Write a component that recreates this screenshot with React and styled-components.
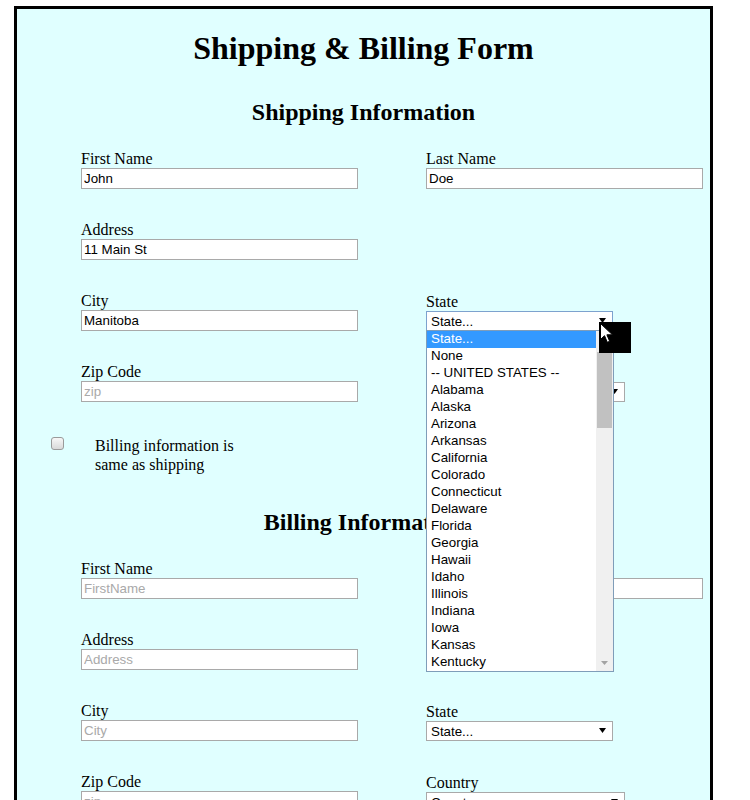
import React from 'react';
import styled, { createGlobalStyle } from 'styled-components';

const GlobalStyle = createGlobalStyle`
  html, body {
    margin: 0;
    padding: 0;
    background: #ffffff;
    overflow: hidden;
  }
  body {
    font-family: "Liberation Serif", "Times New Roman", serif;
    color: #000;
  }
`;

const STATES = [
  'State...',
  'None',
  '-- UNITED STATES --',
  'Alabama',
  'Alaska',
  'Arizona',
  'Arkansas',
  'California',
  'Colorado',
  'Connecticut',
  'Delaware',
  'Florida',
  'Georgia',
  'Hawaii',
  'Idaho',
  'Illinois',
  'Indiana',
  'Iowa',
  'Kansas',
  'Kentucky',
];

const App = () => {
  return (
    <Page>
      <GlobalStyle />
      <Panel>
        <Title>Shipping &amp; Billing Form</Title>

        <SectionTitle $top={32}>Shipping Information</SectionTitle>
        <FieldGrid>
          <Field>
            <Label>First Name</Label>
            <TextInput defaultValue='John' />
          </Field>
          <Field>
            <Label>Last Name</Label>
            <TextInput defaultValue='Doe' />
          </Field>

          <Field>
            <Label>Address</Label>
            <TextInput defaultValue='11 Main St' />
          </Field>
          <div />

          <Field>
            <Label>City</Label>
            <TextInput defaultValue='Manitoba' />
          </Field>
          <Field $shift>
            <Label>State</Label>
            <SelectWrap $width={187}>
              <Select $open>
                <option>State...</option>
              </Select>
              <SelectArrow />
              <DropList>
                <DropItems>
                  {STATES.map((s, i) => (
                    <DropItem key={s} $active={i === 0}>
                      {s}
                    </DropItem>
                  ))}
                </DropItems>
                <ScrollTrack>
                  <ScrollThumb />
                  <ScrollDown>
                    <svg width='7' height='4' viewBox='0 0 7 4'>
                      <path d='M0 0h7L3.5 4z' fill='#a3a3a3' />
                    </svg>
                  </ScrollDown>
                </ScrollTrack>
              </DropList>
              <Cursor>
                <svg width='13' height='21' viewBox='0 0 13 21'>
                  <path
                    d='M0.5 0.5v16l4-3.8 2.8 6.6 2.4-1-2.8-6.5h5.6z'
                    fill='#fff'
                    stroke='#000'
                    strokeWidth='1'
                  />
                </svg>
              </Cursor>
            </SelectWrap>
          </Field>

          <Field>
            <Label>Zip Code</Label>
            <TextInput placeholder='zip' />
          </Field>
          <Field $shift>
            <Label>Country</Label>
            <SelectWrap $width={199}>
              <Select>
                <option>Country...</option>
              </Select>
              <SelectArrow />
            </SelectWrap>
          </Field>
        </FieldGrid>

        <CheckRow>
          <Check type='checkbox' />
          <CheckText>Billing information is same as shipping</CheckText>
        </CheckRow>

        <SectionTitle $top={34}>Billing Information</SectionTitle>
        <FieldGrid>
          <Field>
            <Label>First Name</Label>
            <TextInput placeholder='FirstName' />
          </Field>
          <Field>
            <Label>Last Name</Label>
            <TextInput placeholder='LastName' />
          </Field>

          <Field>
            <Label>Address</Label>
            <TextInput placeholder='Address' />
          </Field>
          <div />

          <Field>
            <Label>City</Label>
            <TextInput placeholder='City' />
          </Field>
          <Field $shift>
            <Label>State</Label>
            <SelectWrap $width={187}>
              <Select>
                <option>State...</option>
              </Select>
              <SelectArrow />
            </SelectWrap>
          </Field>

          <Field>
            <Label>Zip Code</Label>
            <TextInput placeholder='zip' />
          </Field>
          <Field $shift>
            <Label>Country</Label>
            <SelectWrap $width={199}>
              <Select>
                <option>Country...</option>
              </Select>
              <SelectArrow />
            </SelectWrap>
          </Field>
        </FieldGrid>
      </Panel>
    </Page>
  );
};

const SelectArrow = () => (
  <ArrowIcon width='7' height='5' viewBox='0 0 7 5'>
    <path d='M0 0h7L3.5 5z' fill='#000' />
  </ArrowIcon>
);

export default App;

const Page = styled.div`
  padding: 6px 0 0 14px;
`;

const Panel = styled.div`
  width: 693px;
  min-height: 900px;
  border: 3px solid #000;
  background: #e0ffff;
`;

const Title = styled.h1`
  margin: 21px 0 0;
  font-size: 32px;
  line-height: 36px;
  font-weight: bold;
  text-align: center;
`;

const SectionTitle = styled.h2`
  margin: ${({ $top }) => $top}px 0 0;
  font-size: 24px;
  line-height: 28px;
  font-weight: bold;
  text-align: center;
`;

const FieldGrid = styled.div`
  display: grid;
  grid-template-columns: 345px 284px;
  row-gap: 32px;
  margin-top: 24px;
  padding-left: 64px;
`;

const Field = styled.div`
  display: flex;
  flex-direction: column;
  align-items: flex-start;
  padding-top: ${({ $shift }) => ($shift ? '1px' : '0')};
`;

const Label = styled.label`
  font-size: 16px;
  line-height: 18px;
`;

const TextInput = styled.input`
  box-sizing: border-box;
  width: 277px;
  height: 21px;
  margin: 0;
  padding: 1px 2px;
  border: 1px solid #a9a9a9;
  border-radius: 0;
  background: #fff;
  font-family: "Liberation Sans", Arial, sans-serif;
  font-size: 13.33px;
  color: #000;
  outline: none;

  &::placeholder {
    color: #a9a9a9;
  }
`;

const SelectWrap = styled.div`
  position: relative;
  width: ${({ $width }) => $width}px;
  height: 20px;
`;

const Select = styled.select`
  box-sizing: border-box;
  appearance: none;
  width: 100%;
  height: 20px;
  margin: 0;
  padding: 0 0 0 4px;
  border: 1px solid ${({ $open }) => ($open ? '#7da2ce' : '#a9a9a9')};
  border-radius: 0;
  background: #fff;
  font-family: "Liberation Sans", Arial, sans-serif;
  font-size: 13.33px;
  color: #000;
  outline: none;
`;

const ArrowIcon = styled.svg`
  position: absolute;
  right: 7px;
  top: 7px;
  pointer-events: none;
`;

const DropList = styled.div`
  position: absolute;
  top: 19px;
  left: 0;
  box-sizing: border-box;
  width: 188px;
  display: flex;
  border: 1px solid #7f9db9;
  background: #fff;
  z-index: 2;
`;

const DropItems = styled.div`
  flex: 1;
  display: flex;
  flex-direction: column;
`;

const DropItem = styled.div`
  height: 17px;
  padding-left: 4px;
  font-family: "Liberation Sans", Arial, sans-serif;
  font-size: 13.33px;
  line-height: 16px;
  white-space: nowrap;
  color: ${({ $active }) => ($active ? '#fff' : '#000')};
  background: ${({ $active }) => ($active ? '#3399ff' : 'transparent')};
`;

const ScrollTrack = styled.div`
  position: relative;
  width: 17px;
  background: #f0f0f0;
`;

const ScrollThumb = styled.div`
  position: absolute;
  left: 1px;
  right: 1px;
  top: 21px;
  height: 76px;
  background: #c1c1c1;
`;

const ScrollDown = styled.div`
  position: absolute;
  left: 0;
  right: 0;
  bottom: 0;
  height: 17px;
  display: flex;
  align-items: center;
  justify-content: center;
`;

const Cursor = styled.div`
  position: absolute;
  left: 173px;
  top: 11px;
  width: 32px;
  height: 31px;
  background: #000;
  z-index: 3;

  svg {
    display: block;
    margin: 1px 0 0 1px;
  }
`;

const CheckRow = styled.div`
  display: flex;
  align-items: flex-start;
  gap: 31px;
  margin-top: 34px;
  padding-left: 34px;
`;

const Check = styled.input`
  appearance: none;
  box-sizing: border-box;
  width: 13px;
  height: 13px;
  margin: 1px 0 0;
  border: 1px solid #9a9a9a;
  border-radius: 3px;
  background: linear-gradient(#f7f7f7, #d9d9d9);
`;

const CheckText = styled.span`
  width: 160px;
  font-size: 16px;
  line-height: 19px;
`;
